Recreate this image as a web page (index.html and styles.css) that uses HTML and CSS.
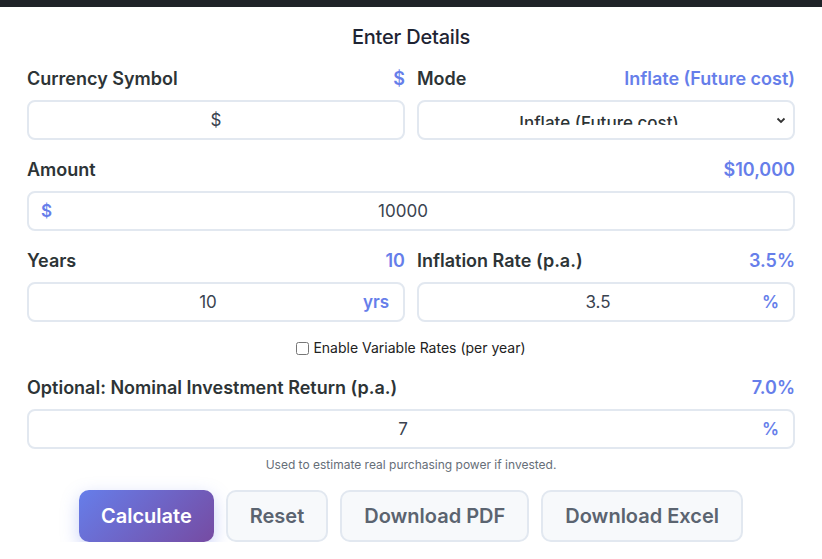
FILE: index.html
```html
<!DOCTYPE html>
<html>
<head>
    <meta charset="utf-8">
    <title>Inflation Calculator</title>
    <link rel="stylesheet" href="styles.css">
</head>
<body>
    <div class="topbar"></div>
    <div class="panel">
        <h2 class="title">Enter Details</h2>

        <div class="row">
            <div class="field">
                <div class="label"><span>Currency Symbol</span><span class="val">$</span></div>
                <div class="box"><input class="inp" type="text" value="$"></div>
            </div>
            <div class="field">
                <div class="label"><span>Mode</span><span class="val">Inflate (Future cost)</span></div>
                <div class="box select">
                    <span class="select-text">Inflate (Future cost)</span>
                    <svg class="chev" width="10" height="8" viewBox="0 0 10 8"><path d="M1.5 2.5 L5 6 L8.5 2.5" fill="none" stroke="#333" stroke-width="1.8"/></svg>
                </div>
            </div>
        </div>

        <div class="field">
            <div class="label"><span>Amount</span><span class="val">$10,000</span></div>
            <div class="box"><span class="pre">$</span><input class="inp pad" type="text" value="10000"></div>
        </div>

        <div class="row">
            <div class="field">
                <div class="label"><span>Years</span><span class="val">10</span></div>
                <div class="box"><input class="inp pad" type="text" value="10"><span class="suf">yrs</span></div>
            </div>
            <div class="field">
                <div class="label"><span>Inflation Rate (p.a.)</span><span class="val">3.5%</span></div>
                <div class="box"><input class="inp pad" type="text" value="3.5"><span class="suf">%</span></div>
            </div>
        </div>

        <label class="check"><input type="checkbox"> Enable Variable Rates (per year)</label>

        <div class="field last">
            <div class="label"><span>Optional: Nominal Investment Return (p.a.)</span><span class="val">7.0%</span></div>
            <div class="box"><input class="inp pad" type="text" value="7"><span class="suf">%</span></div>
        </div>
        <p class="help">Used to estimate real purchasing power if invested.</p>

        <div class="buttons">
            <button class="btn primary">Calculate</button>
            <button class="btn">Reset</button>
            <button class="btn">Download PDF</button>
            <button class="btn">Download Excel</button>
        </div>
    </div>
</body>
</html>
```
FILE: styles.css
```css
* {
    margin: 0;
    padding: 0;
    box-sizing: border-box;
}

body {
    font-family: Inter, "Noto Sans", sans-serif;
    background: #fff;
    color: #2d3436;
}

.topbar {
    height: 7px;
    background: #1f2328;
}

.panel {
    padding: 0 27px;
}

.title {
    margin-top: 16px;
    font-size: 20px;
    line-height: 28px;
    font-weight: 500;
    text-align: center;
    color: #1e2433;
    letter-spacing: -0.2px;
}

.row {
    display: grid;
    grid-template-columns: 1fr 1fr;
    gap: 12px;
}

.row:first-of-type {
    margin-top: 16px;
}

.field {
    margin-bottom: 18px;
}

.field.last {
    margin-bottom: 8px;
}

.label {
    display: flex;
    justify-content: space-between;
    font-size: 18px;
    line-height: 24px;
    font-weight: 600;
    color: #2d3436;
    margin-bottom: 9px;
}

.label .val {
    color: #667eea;
}

.box {
    position: relative;
    height: 40px;
    border: 2px solid #e2e8f0;
    border-radius: 8px;
    background: #fff;
    display: flex;
    align-items: center;
}

.inp {
    width: 100%;
    height: 100%;
    border: 0;
    outline: none;
    background: none;
    text-align: center;
    font: 400 17px Inter, sans-serif;
    color: #3a4350;
    padding: 0 12px;
}

.inp.pad {
    padding: 0 28px 0 12px;
}

.pre,
.suf {
    position: absolute;
    font-size: 17px;
    font-weight: 600;
    color: #667eea;
}

.pre {
    left: 12px;
}

.suf {
    right: 14px;
}

.select {
    overflow: hidden;
}

.select-text {
    display: block;
    width: 100%;
    height: 23px;
    overflow: hidden;
    padding-top: 9px;
    padding-right: 14px;
    text-align: center;
    font-size: 17px;
    line-height: 24px;
    font-weight: 500;
    color: #2d3436;
    align-self: flex-start;
}

.chev {
    position: absolute;
    right: 7px;
    top: 14px;
}

.check {
    display: flex;
    justify-content: center;
    align-items: center;
    gap: 4px;
    font-size: 14px;
    line-height: 20px;
    color: #222;
    margin: -2px 0 18px;
}

.check input {
    width: 13px;
    height: 13px;
}

.help {
    font-size: 12px;
    line-height: 16px;
    text-align: center;
    color: #666e78;
}

.buttons {
    display: flex;
    justify-content: center;
    gap: 12px;
    margin-top: 17px;
}

.btn {
    height: 52px;
    padding: 0 22px;
    border: 2px solid #e2e8f0;
    border-radius: 10px;
    background: #f7f9fb;
    font: 600 20px Inter, sans-serif;
    color: #5b6470;
}

.btn.primary {
    border: 0;
    padding: 0 22px;
    background: linear-gradient(135deg, #667eea, #764ba2);
    color: #fff;
    box-shadow: 0 6px 18px rgba(102, 126, 234, 0.35);
}
```
